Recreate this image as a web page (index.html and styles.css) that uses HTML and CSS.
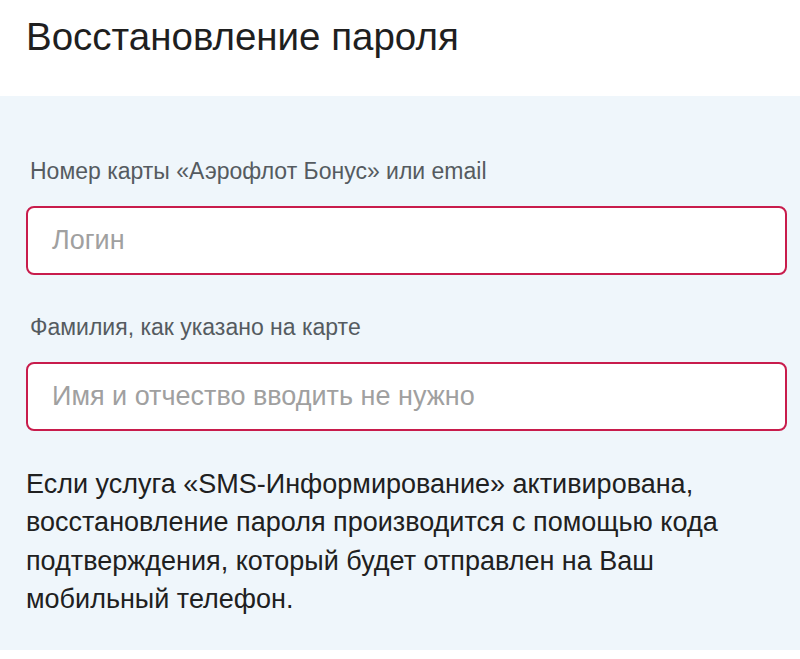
FILE: index.html
```html
<!DOCTYPE html>
<html lang="ru">
<head>
<meta charset="utf-8">
<title>Восстановление пароля</title>
<link rel="stylesheet" href="styles.css">
</head>
<body>
<header class="header">
  <h1 class="title">Восстановление пароля</h1>
</header>
<main class="panel">
  <label class="label">Номер карты «Аэрофлот Бонус» или email</label>
  <div class="field"><span class="placeholder">Логин</span></div>
  <label class="label">Фамилия, как указано на карте</label>
  <div class="field"><span class="placeholder">Имя и отчество вводить не нужно</span></div>
  <p class="note">Если услуга «SMS-Информирование» активирована, восстановление пароля производится с помощью кода подтверждения, который будет отправлен на Ваш мобильный телефон.</p>
</main>
</body>
</html>
```
FILE: styles.css
```css
html, body {
  margin: 0;
  padding: 0;
  background: #ffffff;
  font-family: "Liberation Sans", Arial, sans-serif;
}
.header {
  height: 96px;
  box-sizing: border-box;
  padding: 15px 26px 0;
}
.title {
  margin: 0;
  font-size: 38.5px;
  font-weight: normal;
  color: #1f1f1f;
  line-height: 44px;
}
.panel {
  background: #eff6fb;
  height: 554px;
  box-sizing: border-box;
  padding: 61px 13px 0 26px;
  display: flex;
  flex-direction: column;
}
.label {
  font-size: 23px;
  line-height: 28px;
  color: #555b60;
  padding-left: 4px;
  margin-bottom: 21px;
}
.field {
  height: 69px;
  box-sizing: border-box;
  border: 2px solid #c81c4c;
  border-radius: 8px;
  background: #ffffff;
  display: flex;
  align-items: center;
  padding-left: 24px;
  margin-bottom: 38px;
}
.placeholder {
  font-size: 27px;
  color: #a0a0a0;
}
.note {
  margin: -4px 0 0;
  font-size: 27px;
  line-height: 38.3px;
  color: #202020;
}
```
